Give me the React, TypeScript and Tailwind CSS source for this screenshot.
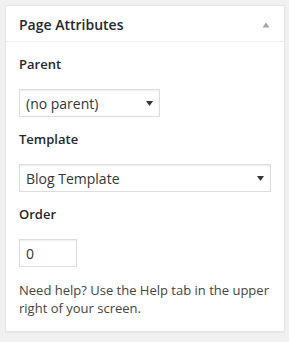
export default function App() {
  return (
    <div className="min-h-screen bg-[#f1f1f1] pl-[5px] pr-[4px] pt-[5px] pb-[10px] font-['Open_Sans',sans-serif]">
      <div className="border border-[#e5e5e5] bg-white shadow-[0_1px_1px_rgba(0,0,0,0.04)]">
        <div className="flex h-[36px] items-center justify-between border-b border-[#eeeeee] pl-[13px] pr-[14px] pt-[1px]">
          <h2 className="text-[14px] font-semibold leading-[19px] text-[#23282d]">Page Attributes</h2>
          <svg width="8" height="6" viewBox="0 0 8 6" className="mt-[1px]">
            <path d="M4 0.5 L7.5 5.5 L0.5 5.5 Z" fill="#a0a5aa" />
          </svg>
        </div>
        <div className="px-[13px] pt-[13px] pb-[14px] text-[#444]">
          <Label>Parent</Label>
          <FakeSelect value="(no parent)" className="mt-[15px] w-[141px]" />
          <Label className="mt-[13px]">Template</Label>
          <FakeSelect value="Blog Template" className="mt-[15px] w-full" />
          <Label className="mt-[13px]">Order</Label>
          <div className="mt-[15px] flex h-[28px] w-[58px] items-center border border-[#dddddd] px-[6px] text-[14px] text-[#32373c] shadow-[inset_0_1px_2px_rgba(0,0,0,0.07)]">
            0
          </div>
          <p className="mt-[14px] text-[13px] leading-[18px] text-[#444]">
            Need help? Use the Help tab in the upper right of your screen.
          </p>
        </div>
      </div>
    </div>
  );
}

function Label({ children, className = "" }: { children: React.ReactNode; className?: string }) {
  return <p className={"text-[13px] font-semibold leading-[19px] text-[#23282d] " + className}>{children}</p>;
}

function FakeSelect({ value, className = "" }: { value: string; className?: string }) {
  return (
    <div
      className={
        "flex h-[28px] items-center justify-between border border-[#dddddd] pl-[6px] pr-[6px] text-[14px] text-[#32373c] shadow-[inset_0_1px_2px_rgba(0,0,0,0.07)] " +
        className
      }
    >
      <span>{value}</span>
      <svg width="7" height="5" viewBox="0 0 7 5">
        <path d="M0 0 L7 0 L3.5 5 Z" fill="#32373c" />
      </svg>
    </div>
  );
}
